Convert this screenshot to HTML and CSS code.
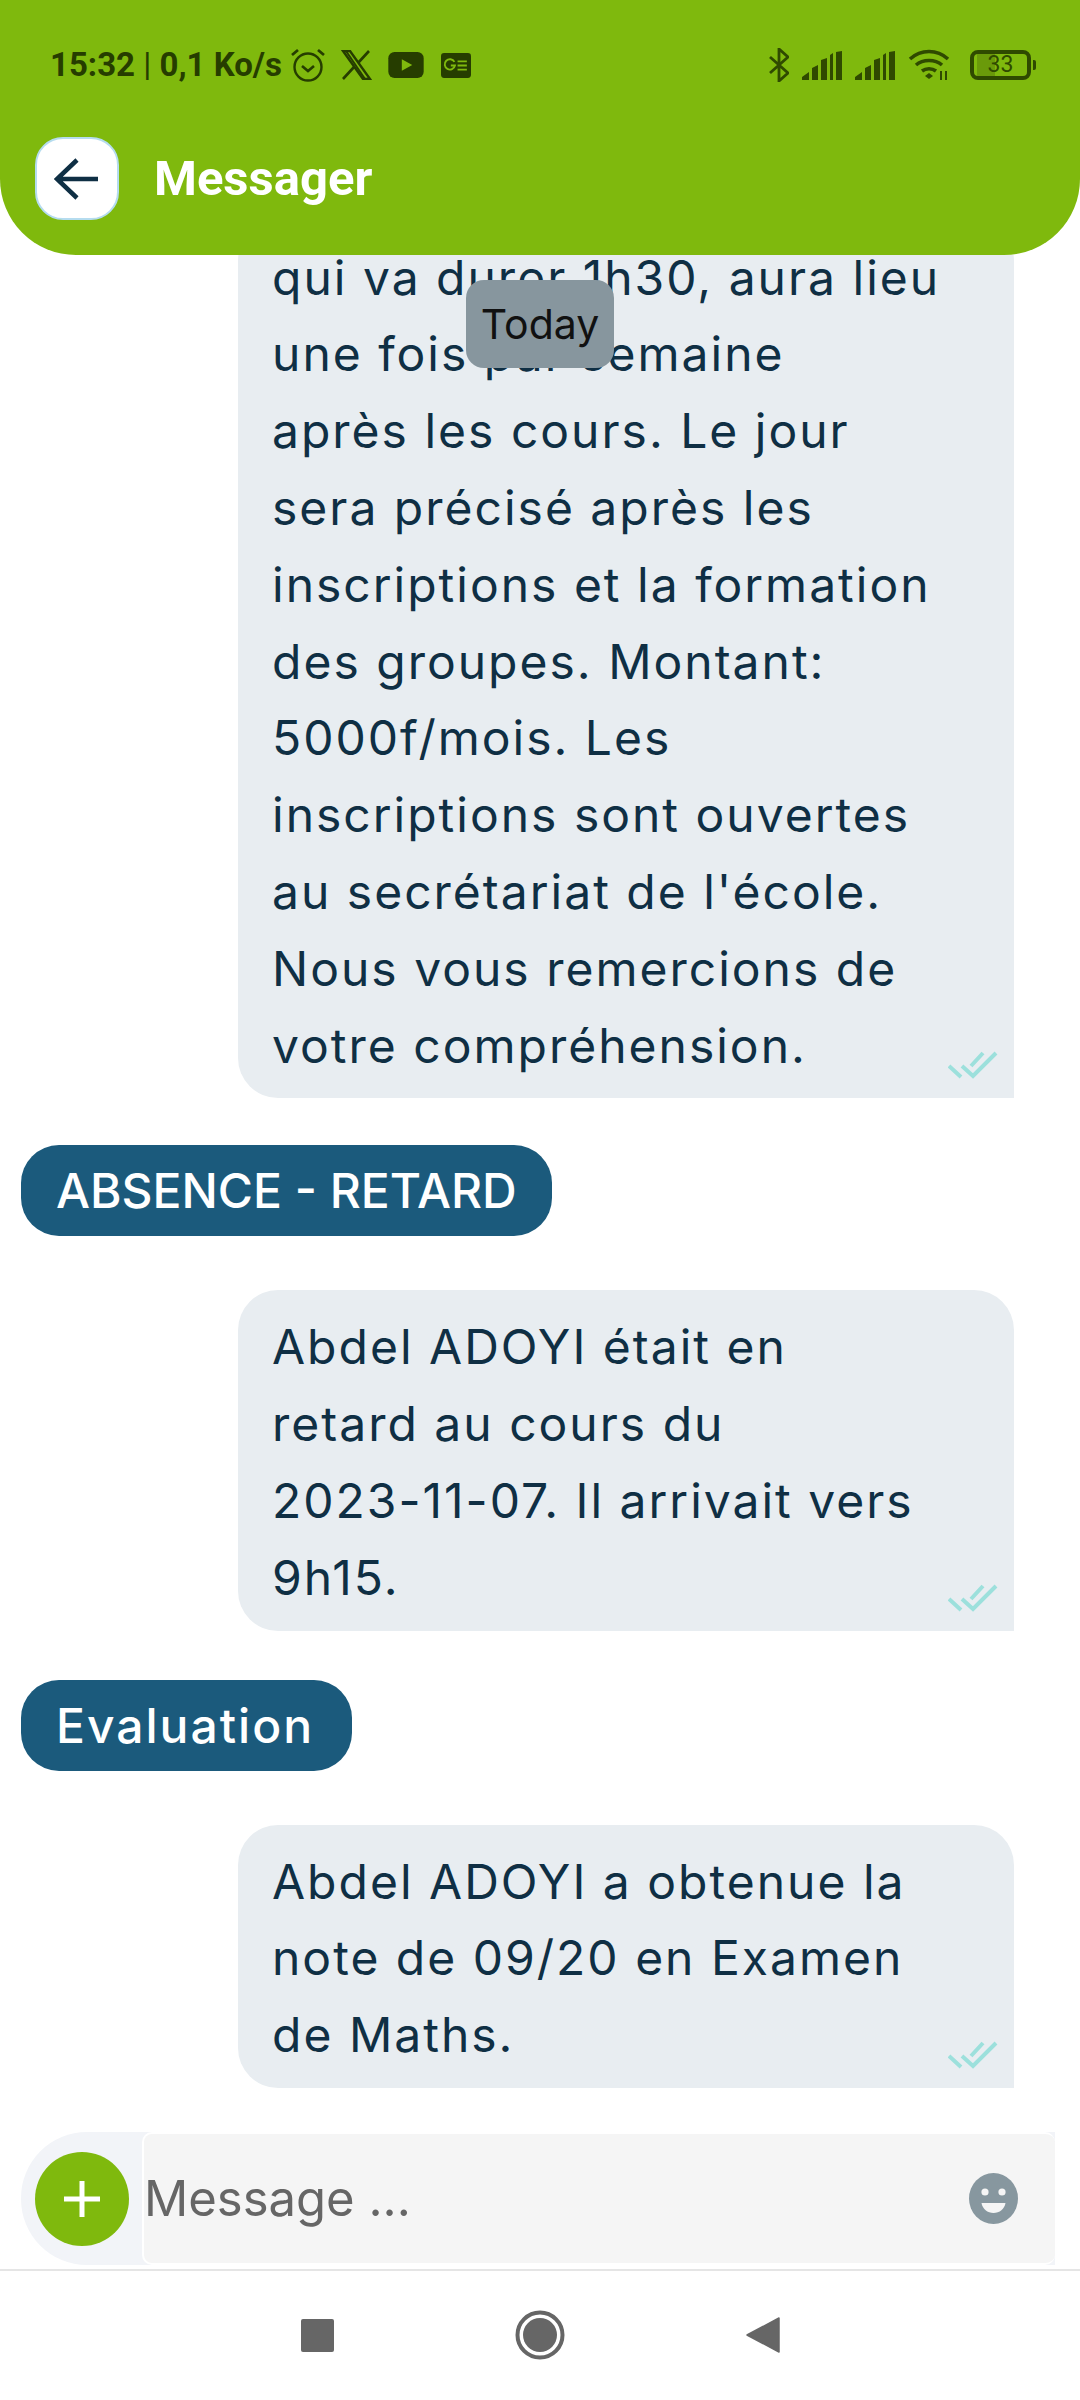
FILE: index.html
```html
<!DOCTYPE html>
<html lang="fr">
<head>
  <meta charset="UTF-8">
  <meta name="viewport" content="width=device-width, initial-scale=1.0">
  <title>Messager</title>
  <link rel="stylesheet" href="styles.css">
</head>
<body>

  <div class="topbar">
    <div class="status">
      <div class="status-left">
        <span class="status-text">15:32 <span class="sep">|</span> 0,1 Ko/s</span>
        <svg class="ic-alarm" width="34" height="34" viewBox="0 0 34 34" fill="none" stroke="#263d00" stroke-width="2.4">
          <circle cx="17" cy="19" r="13.5"/>
          <path d="M11 18l6 5 6-5" stroke-width="2.6"/>
          <path d="M1 7l6-5M33 7l-6-5" stroke-width="2.8"/>
        </svg>
        <svg class="ic-x" width="31" height="30" viewBox="0 0 31 30" fill="none" stroke="#263d00">
          <path d="M2 1h7l20 28h-7z" stroke-width="2.4"/>
          <path d="M5 1l19 28" stroke-width="2"/>
          <path d="M28 1L17 13M13 17L2 29" stroke-width="2.6"/>
        </svg>
        <svg class="ic-yt" width="36" height="26" viewBox="0 0 34 25">
          <rect width="34" height="25" rx="6" fill="#263d00"/>
          <path d="M13 7l10 5.500-10 5.500z" fill="#7fb90d"/>
        </svg>
        <svg class="ic-news" width="30" height="25" viewBox="0 0 29 24">
          <rect width="29" height="24" rx="3" fill="#263d00"/>
          <path d="M13 8.500A5 5 0 1 0 13.500 12H9.500" fill="none" stroke="#7fb90d" stroke-width="1.800"/>
          <path d="M16 8h9M16 12h9M16 16h9" stroke="#7fb90d" stroke-width="1.800"/>
        </svg>
      </div>
      <div class="status-right">
        <svg width="20" height="34" viewBox="0 0 20 34" fill="none" stroke="#2f4a00" stroke-width="2.800">
          <path d="M1 9l18 16-9 8V1l9 8L1 25"/>
        </svg>
        <svg width="40" height="29" viewBox="0 0 40 29" fill="#2f4a00">
          <path d="M0 29v-3l7-5v8zM10 29V17l6-3v15zM19 29V9l6-2v22zM31 29h-3V4l3-2zM40 29h-6V1l6-1z"/>
        </svg>
        <svg width="40" height="29" viewBox="0 0 40 29" fill="#2f4a00">
          <path d="M0 29v-3l7-5v8zM10 29V17l6-3v15zM19 29V9l6-2v22zM31 29h-3V4l3-2zM40 29h-6V1l6-1z"/>
        </svg>
        <svg width="42" height="32" viewBox="0 0 42 32" fill="none" stroke="#2f4a00" stroke-width="3.600">
          <path d="M2 10c11-10 27-10 38 0"/>
          <path d="M8 16c7-6 19-6 26 0"/>
          <path d="M14 22c4-3 10-3 14 0" />
          <path d="M17 27l4-3 4 3-4 3z" fill="#2f4a00" stroke="none"/>
          <path d="M33 22v9M38 22v9" stroke-width="2"/>
        </svg>
        <div class="battery">
          <div class="battery-level"></div>
          <span class="battery-num">33</span>
        </div>
        <div class="battery-nub"></div>
      </div>
    </div>
    <div class="titlebar">
      <button class="back-btn">
        <svg width="44" height="44" viewBox="0 0 44 44" fill="none" stroke="#0f2f44" stroke-width="4.500">
          <path d="M44 22H4M23 3L3 22l20 19"/>
        </svg>
      </button>
      <h1>Messager</h1>
    </div>
  </div>

  <div class="chat">
    <div class="bubble">
      qui va durer 1h30, aura lieu<br>
      une fois par semaine<br>
      après les cours. Le jour<br>
      sera précisé après les<br>
      inscriptions et la formation<br>
      des groupes. Montant:<br>
      5000f/mois. Les<br>
      inscriptions sont ouvertes<br>
      au secrétariat de l'école.<br>
      Nous vous remercions de<br>
      votre compréhension.
      <svg class="check" width="50" height="28" viewBox="0 0 50 28" fill="none" stroke="#9ce0dc" stroke-width="4"><path d="M1 15l12 11M14 15l11 10L48 2M23 15L35 2"/></svg>
    </div>

    <div class="tag tag-first">ABSENCE - RETARD</div>

    <div class="bubble">
      Abdel ADOYI était en<br>
      retard au cours du<br>
      2023-11-07. Il arrivait vers<br>
      9h15.
      <svg class="check" width="50" height="28" viewBox="0 0 50 28" fill="none" stroke="#9ce0dc" stroke-width="4"><path d="M1 15l12 11M14 15l11 10L48 2M23 15L35 2"/></svg>
    </div>

    <div class="tag tag-eval">Evaluation</div>

    <div class="bubble">
      Abdel ADOYI a obtenue la<br>
      note de 09/20 en Examen<br>
      de Maths.
      <svg class="check" width="50" height="28" viewBox="0 0 50 28" fill="none" stroke="#9ce0dc" stroke-width="4"><path d="M1 15l12 11M14 15l11 10L48 2M23 15L35 2"/></svg>
    </div>

    <div class="today">Today</div>
  </div>

  <div class="composer">
    <div class="plus-wrap">
      <div class="plus-btn">
        <svg width="36" height="36" viewBox="0 0 36 36" stroke="#fff" stroke-width="5"><path d="M0 18h36M18 0v36"/></svg>
      </div>
    </div>
    <div class="input-box">
      <span class="placeholder">Message ...</span>
      <svg width="49" height="51" viewBox="0 0 49 51">
        <ellipse cx="24.500" cy="25.500" rx="24.500" ry="25.500" fill="#87979f"/>
        <circle cx="16" cy="19" r="3.600" fill="#f5f5f5"/>
        <circle cx="33" cy="19" r="3.600" fill="#f5f5f5"/>
        <path d="M12.500 30h24c-1 6-6 10-12 10s-11-4-12-10z" fill="#f5f5f5"/>
      </svg>
    </div>
  </div>

  <div class="navbar">
    <div class="nav-square"></div>
    <svg width="50" height="50" viewBox="0 0 50 50">
      <circle cx="25" cy="25" r="22.500" fill="none" stroke="#666" stroke-width="4"/>
      <circle cx="25" cy="25" r="17" fill="#666"/>
    </svg>
    <svg width="34" height="36" viewBox="0 0 34 36"><path d="M33 1v34L1 18z" fill="#666" stroke="#666" stroke-width="1.500" stroke-linejoin="round"/></svg>
  </div>

</body>
</html>
```

FILE: styles.css
```css
* {
  box-sizing: border-box;
}
html, body {
  margin: 0;
  height: 100%;
}
body {
  width: 1080px;
  height: 2400px;
  display: flex;
  flex-direction: column;
  background: #fff;
  font-family: Inter, "Open Sans", sans-serif;
  overflow: hidden;
}

/* top green area */
.topbar {
  height: 255px;
  flex: none;
  background: #7fb90d;
  border-radius: 0 0 76px 76px;
  position: relative;
  z-index: 2;
  padding: 47px 44px 0 0;
}
.status {
  display: flex;
  justify-content: space-between;
  align-items: flex-start;
  height: 36px;
}
.status-left {
  display: flex;
  align-items: center;
  padding-left: 50px;
  height: 36px;
}
.status-text {
  font-family: Roboto, sans-serif;
  font-weight: 700;
  font-size: 33px;
  line-height: 36px;
  color: #263d00;
  white-space: nowrap;
  width: 241px;
}
.sep {
  font-weight: 400;
}
.ic-x {
  margin-left: 16px;
}
.ic-yt {
  margin-left: 16px;
}
.ic-news {
  margin-left: 17px;
}
.status-right {
  display: flex;
  align-items: center;
  gap: 13px;
  height: 36px;
}
.battery {
  width: 61px;
  height: 30px;
  border: 4px solid #2f4a00;
  border-radius: 8px;
  position: relative;
  margin-left: 7px;
}
.battery-level {
  width: 18px;
  height: 100%;
  background: #6a9a0a;
  margin-left: 3px;
}
.battery-num {
  position: absolute;
  left: 0;
  right: 0;
  top: -3px;
  text-align: center;
  font-family: Roboto, sans-serif;
  font-size: 23px;
  line-height: 28px;
  color: #2f4a00;
}
.battery-nub {
  width: 3px;
  height: 10px;
  background: #2f4a00;
  border-radius: 0 2px 2px 0;
  margin-left: -11px;
}
.titlebar {
  display: flex;
  align-items: center;
  padding-left: 35px;
  margin-top: 54px;
}
.back-btn {
  width: 84px;
  height: 83px;
  display: flex;
  align-items: center;
  justify-content: flex-start;
  padding: 0 0 0 17px;
  background: #fff;
  border: 2px solid #b5dcef;
  border-radius: 28px;
}
.titlebar h1 {
  margin: 0 0 0 35px;
  font-family: Roboto, sans-serif;
  font-weight: 700;
  font-size: 49px;
  color: #fff;
}

/* messages */
.chat {
  flex: 1;
  min-height: 0;
  position: relative;
  overflow: hidden;
  display: flex;
  flex-direction: column;
  justify-content: flex-end;
  align-items: flex-start;
  padding-bottom: 44px;
}
.bubble {
  flex: none;
  position: relative;
  width: 776px;
  margin-left: 238px;
  padding: 19px 34px 14px;
  background: #e8edf1;
  border-radius: 40px 40px 0 40px;
  font-size: 48px;
  letter-spacing: 2px;
  line-height: 76.8px;
  color: #0f2f44;
  white-space: nowrap;
}
.check {
  position: absolute;
  right: 16px;
  bottom: 19px;
}
.tag {
  flex: none;
  height: 91px;
  margin: 49px 0 54px 21px;
  padding: 0 35px;
  display: flex;
  align-items: center;
  background: #1b5a7c;
  border-radius: 38px;
  font-size: 48px;
  font-weight: 500;
  color: #fff;
  white-space: nowrap;
}
.tag-first {
  margin-top: 47px;
  margin-bottom: 54px;
}
.tag-eval {
  letter-spacing: 2px;
  padding-right: 38px;
}
.today {
  position: absolute;
  left: 466px;
  top: 25px;
  width: 148px;
  height: 88px;
  display: flex;
  align-items: center;
  justify-content: center;
  background: #87969e;
  border-radius: 18px;
  font-size: 41px;
  color: #111;
}

/* message box */
.composer {
  flex: none;
  height: 133px;
  margin: 0 25px 0 21px;
  display: flex;
  background: #f2f4f8;
  border-radius: 66px 0 0 66px;
}
.plus-wrap {
  width: 121px;
  flex: none;
  display: flex;
  align-items: center;
  padding-left: 14px;
}
.plus-btn {
  width: 94px;
  height: 94px;
  border-radius: 50%;
  background: #7fb90d;
  display: flex;
  align-items: center;
  justify-content: center;
}
.input-box {
  flex: 1;
  display: flex;
  align-items: center;
  justify-content: space-between;
  padding: 0 37px 0 0;
  background: #f5f5f5;
  border: 2px solid #fff;
  border-right: 0;
  border-radius: 10px;
}
.placeholder {
  font-size: 49px;
  color: #666;
}
.navbar {
  flex: none;
  height: 131px;
  margin-top: 4px;
  border-top: 2px solid #e5e5e5;
  display: flex;
  align-items: center;
  justify-content: center;
  gap: 181px;
  padding-bottom: 1px;
}
.nav-square {
  width: 33px;
  height: 33px;
  background: #666;
  border-radius: 2px;
}
```
